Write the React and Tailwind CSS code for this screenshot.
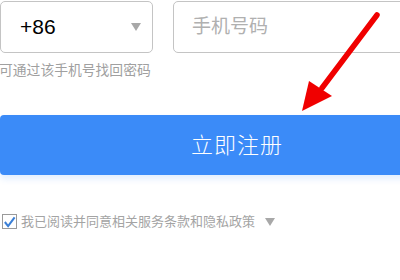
import React from 'react';

const Triangle = ({ className }) => (
  <svg viewBox="0 0 10 8" className={className}>
    <path d="M0 0 L10 0 L5 8 Z" fill="currentColor" />
  </svg>
);

const App = () => {
  return (
    <div className="relative w-[400px] h-[280px] overflow-hidden bg-white" style={{ fontFamily: '"Liberation Sans", "Noto Sans CJK SC", sans-serif' }}>
      {/* Phone row */}
      <div className="flex gap-[20px] pt-px">
        <div className="w-[153px] h-[52px] shrink-0 border border-[#c4c4c4] rounded-[5px] flex items-center pl-[19px] pr-[11px]">
          <span className="text-[21px] text-black">+86</span>
          <Triangle className="ml-auto w-[10px] h-[8px] text-[#a8a8a8]" />
        </div>
        <div className="w-[300px] h-[52px] shrink-0 border border-[#c4c4c4] rounded-[5px] flex items-center pl-[18px]">
          <span className="text-[19px] text-[#b0b0b0]">手机号码</span>
        </div>
      </div>

      {/* Hint */}
      <div className="mt-[8px] text-[13.8px] leading-[20px] text-[#a0a0a0] -ml-[1px]">可通过该手机号找回密码</div>

      {/* Submit button */}
      <div className="mt-[34px] w-[474px] h-[60px] bg-[#3b8bf8] rounded-[4px] shadow-[0_4px_6px_rgba(59,139,248,0.15)] flex items-center justify-center">
        <span className="text-[22px] font-light text-white tracking-[1px]">立即注册</span>
      </div>

      {/* Agreement */}
      <div className="mt-[37px] flex items-center pl-[2px]">
        <div className="w-[15px] h-[15px] border border-[#9a9a9a] bg-white flex items-center justify-center">
          <svg viewBox="0 0 14 14" className="w-[14px] h-[14px]">
            <path d="M2 7 L5.5 11.5 L12.5 2" fill="none" stroke="#3a7fd6" strokeWidth="2.2" />
          </svg>
        </div>
        <span className="ml-[4px] text-[13px] text-[#a4a4a4]">我已阅读并同意相关服务条款和隐私政策</span>
        <Triangle className="ml-[10px] w-[10px] h-[8px] text-[#a8a8a8]" />
      </div>

      {/* Red arrow overlay */}
      <svg className="absolute left-0 top-0 w-[400px] h-[280px] pointer-events-none" viewBox="0 0 400 280">
        <line x1="377" y1="15" x2="322" y2="88" stroke="#f00000" strokeWidth="5.5" strokeLinecap="round" />
        <polygon points="302,111 309,81 332,96" fill="#f00000" />
      </svg>
    </div>
  );
};

export default App;
